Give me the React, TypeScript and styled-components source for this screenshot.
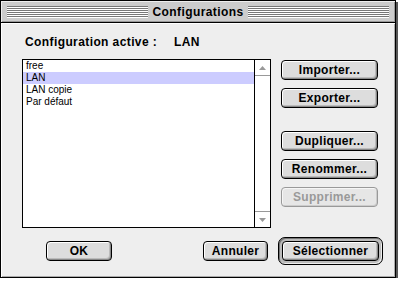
import styled, {createGlobalStyle} from "styled-components";

const GlobalStyle = createGlobalStyle`
  body {
    margin: 0;
    background: #ffffff;
  }
`;

const Window = styled.div`
  width: 394px;
  height: 276px;
  border: 1px solid #000;
  box-shadow: 2px 2px 0 #555;
  display: flex;
  flex-direction: column;
  background: #eeeeee;
  font-family: "Liberation Sans", Arial, sans-serif;
`;

const TitleBar = styled.div`
  height: 21px;
  border-bottom: 1px solid #000;
  background: #cccccc;
  box-shadow: inset 1px 1px 0 #eeeeee, inset -1px -1px 0 #999;
  display: flex;
  align-items: center;
  padding: 0 6px;
  gap: 5px;
`;

const Stripes = styled.div`
  flex: 1;
  height: 12px;
  background: repeating-linear-gradient(
    to bottom,
    #777 0px, #777 1px,
    #fff 1px, #fff 2px
  );
`;

const Title = styled.span`
  font-weight: bold;
  font-size: 12px;
  letter-spacing: 0.4px;
  color: #000;
`;

const Body = styled.div`
  flex: 1;
  padding: 12px 0 0 21px;
  box-shadow: inset 1px 1px 0 #fff, inset -1px -1px 0 #aaa;
`;

const ActiveLine = styled.div`
  display: flex;
  height: 14px;
  line-height: 14px;
  padding-left: 3px;
  font-size: 12px;
  font-weight: bold;
  letter-spacing: 0.4px;
`;

const ActiveLabel = styled.span`
  width: 149px;
`;

const Main = styled.div`
  display: flex;
  margin-top: 10px;
`;

const ListBox = styled.div`
  width: 247px;
  height: 167px;
  border: 1px solid #000;
  background: #fff;
  display: flex;
`;

const Items = styled.ul`
  flex: 1;
  margin: 0;
  padding: 0;
  list-style: none;
`;

const Item = styled.li<{$selected?: boolean}>`
  height: 12px;
  line-height: 12px;
  padding-left: 3px;
  font-size: 10px;
  background: ${p => (p.$selected ? "#ccccff" : "transparent")};
`;

const ScrollBar = styled.div`
  width: 15px;
  border-left: 1px solid #000;
  display: flex;
  flex-direction: column;
  justify-content: space-between;
`;

const ArrowBox = styled.div<{$down?: boolean}>`
  height: 15px;
  display: flex;
  align-items: center;
  justify-content: center;
  border-${p => (p.$down ? "top" : "bottom")}: 1px solid #999;
`;

const Side = styled.div`
  display: flex;
  flex-direction: column;
  margin-left: 10px;
  padding-top: 1px;
`;

const Button = styled.button<{$w?: number; $top?: number; $left?: number}>`
  width: ${p => p.$w ?? 97}px;
  height: 20px;
  margin: ${p => p.$top ?? 0}px 0 0 ${p => p.$left ?? 0}px;
  padding: 0;
  border: 1px solid #000;
  border-radius: 4px;
  background: #dddddd;
  box-shadow: inset 1px 1px 0 #fff, inset -1px -1px 0 #888, inset -2px -2px 0 #bbb;
  font-family: "Liberation Sans", Arial, sans-serif;
  font-weight: bold;
  font-size: 12px;
  letter-spacing: 0.3px;
  color: #000;
  &:disabled {
    border-color: #999;
    color: #999;
    background: #e6e6e6;
    box-shadow: inset 1px 1px 0 #f6f6f6, inset -1px -1px 0 #ccc;
  }
`;

const DefaultRing = styled.div`
  margin-left: 10px;
  border: 1px solid #000;
  border-radius: 7px;
  padding: 3px;
  background: #bbbbbb;
  box-shadow: inset 1px 1px 0 #777, inset -1px -1px 0 #eee;
  display: flex;
`;

const Footer = styled.div`
  display: flex;
  align-items: center;
  margin-top: 9px;
`;

function Arrow({down}: {down?: boolean}) {
    return (
        <svg width="7" height="4" viewBox="0 0 7 4">
            <polygon points={down ? "0,0 7,0 3.5,4" : "0,4 7,4 3.5,0"} fill="#999"/>
        </svg>
    );
}

const configs = ["free", "LAN", "LAN copie", "Par défaut"];

function App() {
    return (
        <>
            <GlobalStyle/>
            <Window>
                <TitleBar>
                    <Stripes/>
                    <Title>Configurations</Title>
                    <Stripes/>
                </TitleBar>
                <Body>
                    <ActiveLine>
                        <ActiveLabel>Configuration active :</ActiveLabel>
                        <span>LAN</span>
                    </ActiveLine>
                    <Main>
                        <ListBox>
                            <Items>
                                {configs.map(c =>
                                    <Item key={c} $selected={c === "LAN"}>{c}</Item>
                                )}
                            </Items>
                            <ScrollBar>
                                <ArrowBox><Arrow/></ArrowBox>
                                <ArrowBox $down><Arrow down/></ArrowBox>
                            </ScrollBar>
                        </ListBox>
                        <Side>
                            <Button>Importer...</Button>
                            <Button $top={8}>Exporter...</Button>
                            <Button $top={23}>Dupliquer...</Button>
                            <Button $top={8}>Renommer...</Button>
                            <Button $top={8} disabled>Supprimer...</Button>
                        </Side>
                    </Main>
                    <Footer>
                        <Button $w={66} $left={24}>OK</Button>
                        <Button $w={65} $left={91}>Annuler</Button>
                        <DefaultRing>
                            <Button>Sélectionner</Button>
                        </DefaultRing>
                    </Footer>
                </Body>
            </Window>
        </>
    );
}

export default App;
